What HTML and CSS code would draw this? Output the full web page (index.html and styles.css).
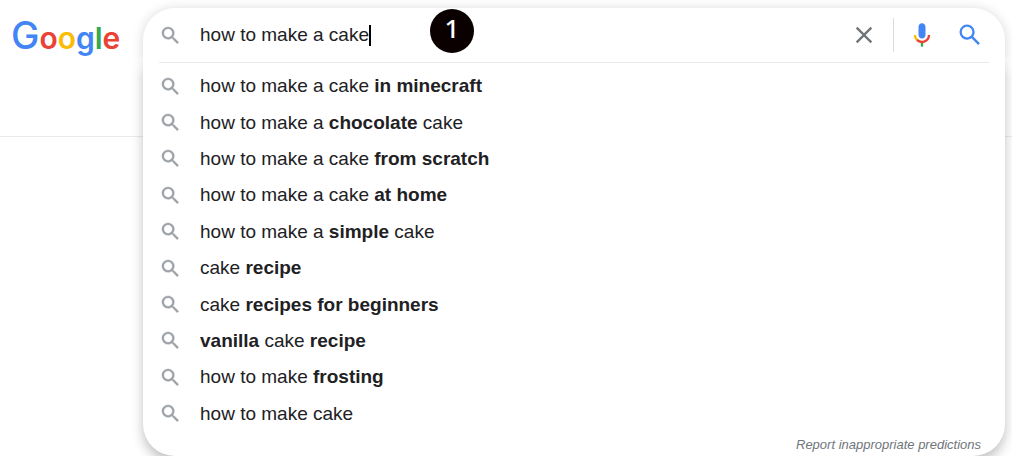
FILE: index.html
```html
<!doctype html>
<html lang="en">
	<head>
		<title>how to make a cake - Google Search</title>
		<meta charset="utf-8" />
		<meta name="viewport" content="width=device-width, initial-scale=1" />
		<link rel="stylesheet" href="styles.css">
	</head>

	<body>

		<svg class="defs" aria-hidden="true">
			<symbol id="search" viewBox="0 0 24 24">
				<path d="M15.5 14h-.79l-.28-.27A6.47 6.47 0 0 0 16 9.5 6.5 6.5 0 1 0 9.5 16c1.61 0 3.09-.59 4.23-1.57l.27.28v.79l5 4.99L20.49 19l-4.99-5zm-6 0C7.01 14 5 11.99 5 9.5S7.01 5 9.5 5 14 7.01 14 9.5 11.99 14 9.5 14z"/>
			</symbol>
		</svg>

		<header class="header">
			<a class="logo" href="#" aria-label="Google"><span class="blue big">G</span><span class="red">o</span><span class="yellow">o</span><span class="blue">g</span><span class="green">l</span><span class="red">e</span></a>

			<form class="search">
				<div class="panel">
					<div class="bar">
						<svg class="icon"><use href="#search"/></svg>
						<div class="field">
							<input class="query" type="text" name="q" value="how to make a cake" aria-label="Search" autocomplete="off">
							<span class="caret"></span>
						</div>
						<button class="tool clear" type="button" aria-label="Clear">
							<svg viewBox="0 0 24 24"><path fill="#70757a" d="M19 6.41L17.59 5 12 10.59 6.41 5 5 6.41 10.59 12 5 17.59 6.41 19 12 13.41 17.59 19 19 17.59 13.41 12z"/></svg>
						</button>
						<span class="divider"></span>
						<button class="tool mic" type="button" aria-label="Search by voice">
							<svg viewBox="0 0 24 24">
								<path fill="#4285f4" d="M12 15c1.66 0 3-1.31 3-2.97V5.01C15 3.35 13.66 2 12 2S9 3.34 9 5.01v7.02C9 13.69 10.34 15 12 15z"/>
								<path fill="#34a853" d="M11 18.08h2V22h-2z"/>
								<path fill="#fbbc05" d="M7.05 16.87C5.78 15.54 5 14.04 5 12h2c0 1.45.56 2.42 1.47 3.38v.32l-1.15 1.18z"/>
								<path fill="#ea4335" d="M12 16.93a4.97 5.25 0 0 1-3.54-1.55l-1.41 1.49C8.31 18.21 10.07 19 12 19c3.87 0 6.99-2.92 6.99-7H17c0 2.92-2.24 4.93-5 4.93z"/>
							</svg>
						</button>
						<button class="tool submit" type="submit" aria-label="Google Search">
							<svg viewBox="0 0 24 24"><path fill="#4285f4" d="M20.49 19l-5.73-5.73C15.53 12.2 16 10.91 16 9.5A6.5 6.5 0 1 0 9.5 16c1.41 0 2.7-.47 3.77-1.24L19 20.49 20.49 19zM5 9.5C5 7.01 7.01 5 9.5 5S14 7.01 14 9.5 11.99 14 9.5 14 5 11.99 5 9.5z"/></svg>
						</button>
						<span class="step">1</span>
					</div>

					<div class="suggestions">
						<ul class="list">
							<li class="item"><svg class="icon"><use href="#search"/></svg><span>how to make a cake <b>in minecraft</b></span></li>
							<li class="item"><svg class="icon"><use href="#search"/></svg><span>how to make a <b>chocolate</b> cake</span></li>
							<li class="item"><svg class="icon"><use href="#search"/></svg><span>how to make a cake <b>from scratch</b></span></li>
							<li class="item"><svg class="icon"><use href="#search"/></svg><span>how to make a cake <b>at home</b></span></li>
							<li class="item"><svg class="icon"><use href="#search"/></svg><span>how to make a <b>simple</b> cake</span></li>
							<li class="item"><svg class="icon"><use href="#search"/></svg><span>cake <b>recipe</b></span></li>
							<li class="item"><svg class="icon"><use href="#search"/></svg><span>cake <b>recipes for beginners</b></span></li>
							<li class="item"><svg class="icon"><use href="#search"/></svg><span><b>vanilla</b> cake <b>recipe</b></span></li>
							<li class="item"><svg class="icon"><use href="#search"/></svg><span>how to make <b>frosting</b></span></li>
							<li class="item"><svg class="icon"><use href="#search"/></svg><span>how to make cake</span></li>
						</ul>
						<a class="report" href="#">Report inappropriate predictions</a>
					</div>
				</div>
			</form>
		</header>

	</body>
</html>
```

FILE: styles.css
```css
* {
	box-sizing: border-box;
}

body {
	min-height: 100vh;
	margin: 0;
	background-color: #fff;
	color: #212124;
	font-family: "Liberation Sans", Arial, sans-serif;
	font-size: 19px;
}

.defs {
	display: none;
}

/* HEADER */

.header {
	display: flex;
	height: 137px;
	padding: 8px 7px 0 11px;
	border-bottom: 1px solid #ebebeb;
}

.logo {
	flex: none;
	width: 132px;
	padding-top: 4px;
	font-family: Inter, sans-serif;
	font-size: 30px;
	font-weight: 600;
	line-height: 46px;
	text-decoration: none;
}

.big {
	font-size: 38px;
	font-weight: 500;
}

.blue {
	color: #4285f4;
}

.red {
	color: #ea4335;
}

.yellow {
	color: #fbbc05;
}

.green {
	color: #34a853;
}

/* SEARCH BOX */

.search {
	flex: 1;
	position: relative;
}

/* opens over the page below the header */
.panel {
	position: absolute;
	top: 0;
	left: 0;
	right: 0;
}

.bar {
	position: relative;
	display: flex;
	align-items: center;
	height: 54px;
	padding: 0 21px 0 16px;
	background-color: #fff;
	border-radius: 32px 32px 0 0;
	box-shadow: 0 1px 12px rgba(32, 33, 36, 0.18);
}

.icon {
	flex: none;
	width: 23px;
	height: 23px;
	margin-right: 18px;
	fill: #9aa0a6;
	stroke: #9aa0a6;
	stroke-width: 0.4;
}

.field {
	flex: 1;
	display: flex;
	align-items: center;
}

.query {
	field-sizing: content;
	padding: 0;
	border: 0;
	outline: 0;
	background: none;
	color: inherit;
	font: inherit;
}

.caret {
	width: 2px;
	height: 21px;
	background-color: #000;
}

.tool {
	display: flex;
	padding: 0;
	border: 0;
	background: none;
}

.tool svg {
	width: 28px;
	height: 28px;
}

.divider {
	width: 1px;
	height: 34px;
	margin: 0 14px 0 15px;
	background-color: #dadce0;
}

.mic {
	margin-right: 20px;
}

.step {
	position: absolute;
	top: 1px;
	left: 287px;
	width: 44px;
	height: 44px;
	border-radius: 50%;
	background-color: #0a0000;
	color: #fff;
	font-family: "Noto Sans", sans-serif;
	font-size: 26px;
	font-weight: 500;
	line-height: 38px;
	text-align: center;
}

/* SUGGESTIONS */

.suggestions {
	position: relative;
	display: flex;
	flex-direction: column;
	padding: 0 16px 3px;
	background-color: #fff;
	border-radius: 0 0 32px 32px;
	box-shadow: 0 6px 12px rgba(32, 33, 36, 0.28);
	clip-path: inset(0 -24px -24px -24px);
}

.list {
	display: grid;
	grid-auto-rows: 1fr;
	height: 370px;
	margin: 0;
	padding: 5px 0 0;
	border-top: 1px solid #e8eaed;
	list-style: none;
}

.item {
	display: flex;
	align-items: center;
}

.report {
	align-self: flex-end;
	margin-right: 8px;
	padding-top: 5px;
	color: #70757a;
	font-size: 13px;
	font-style: italic;
	line-height: 16px;
	text-decoration: none;
}
```
